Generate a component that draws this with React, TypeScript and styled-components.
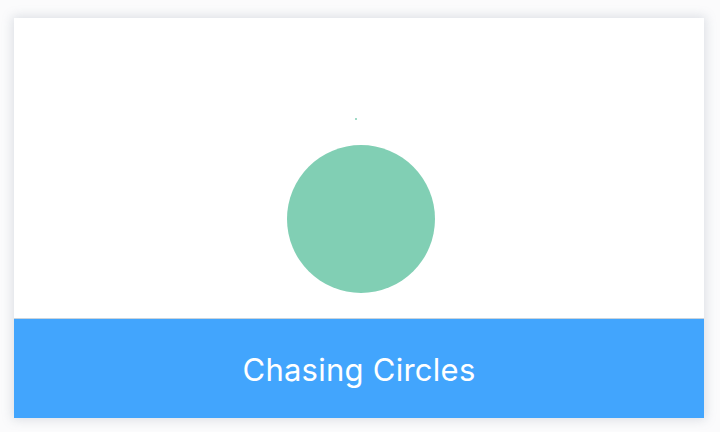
import React from "react";
import styled, { createGlobalStyle } from "styled-components";

const Global = createGlobalStyle`
  html, body { margin: 0; padding: 0; background: #ffffff; }
  body { font-family: Inter, "Noto Sans", sans-serif; }
`;

const Page = styled.div`
  width: 720px;
  height: 432px;
  box-sizing: border-box;
  padding: 18px 16px 14px 14px;
  display: flex;
  background: #fbfbfc;
`;

const Card = styled.div`
  flex: 1;
  display: flex;
  flex-direction: column;
  background: #ffffff;
  box-shadow: 0 0 10px 2px rgba(120, 130, 150, 0.22);
`;

const Stage = styled.div`
  flex: 1;
  display: flex;
  flex-direction: column;
  align-items: center;
  padding-top: 100px;
  box-sizing: border-box;
`;

const Dot = styled.div<{ $size: number; $dx: number; $dy: number }>`
  width: ${(p) => p.$size}px;
  height: ${(p) => p.$size}px;
  border-radius: 50%;
  background: #81cfb4;
  margin-left: ${(p) => p.$dx * 2}px;
  margin-top: ${(p) => p.$dy}px;
  flex-shrink: 0;
`;

const Footer = styled.div`
  box-sizing: border-box;
  height: 100px;
  background: #42a5fd;
  border-top: 1px solid #c9d3dc;
  display: flex;
  align-items: center;
  justify-content: center;
  color: #ffffff;
  font-family: Inter, "Noto Sans", sans-serif;
  font-size: 31px;
  font-weight: 400;
  letter-spacing: 0.25px;
  padding-top: 1px;
`;

export default function App() {
  return (
    <>
      <Global />
      <Page>
        <Card>
          <Stage>
            <Dot $size={2} $dx={-3} $dy={0} />
            <Dot $size={148} $dx={2} $dy={25} />
          </Stage>
          <Footer>Chasing Circles</Footer>
        </Card>
      </Page>
    </>
  );
}
